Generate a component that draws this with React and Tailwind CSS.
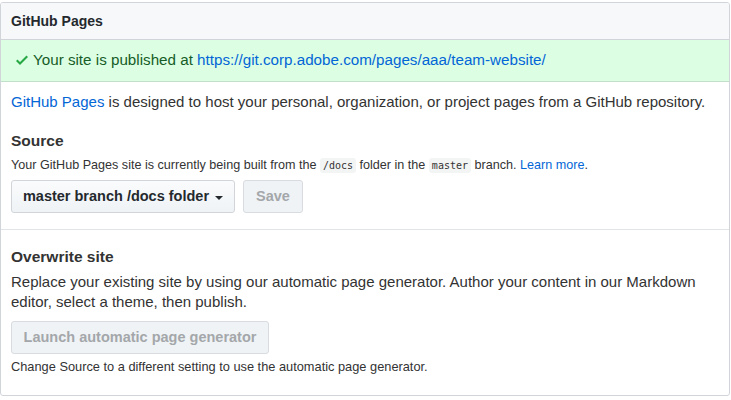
export default function App() {
  const mono = { fontFamily: '"DejaVu Sans Mono", "Liberation Mono", monospace' };

  return (
    <div
      className="bg-white pt-[2px] text-[#333] text-[15px]"
      style={{ fontFamily: '"Liberation Sans", Arial, sans-serif' }}
    >
      <div className="w-[730px] border border-[#d1d5da] rounded-[3px] overflow-hidden">
        {/* header */}
        <div className="bg-[#f6f8fa] border-b border-[#d1d5da] px-[10px] py-2 leading-5 text-sm font-bold text-[#24292e]">
          GitHub Pages
        </div>

        {/* published banner */}
        <div className="bg-[#dcffe4] border-b border-[#c3dfc9] pl-[15px] pt-[10px] pb-[11px] leading-5 text-[#165c26] flex items-center">
          <svg width="12" height="16" viewBox="0 0 12 16" className="mr-[5px] fill-[#28a745]">
            <path fillRule="evenodd" d="M12 5l-8 8-4-4 1.5-1.5L4 10l6.5-6.5L12 5z" />
          </svg>
          <span className="text-[15.2px]">
            Your site is published at{" "}
            <a href="#" className="text-[#0366d6]">
              https://git.corp.adobe.com/pages/aaa/team-website/
            </a>
          </span>
        </div>

        {/* source */}
        <div className="px-[10px] pt-[10px] pb-4 border-b border-[#e1e4e8]">
          <p className="leading-5">
            <a href="#" className="text-[#0366d6]">GitHub Pages</a> is designed to host your personal,
            organization, or project pages from a GitHub repository.
          </p>
          <h3 className="mt-[19px] text-[15.5px] font-bold leading-5">Source</h3>
          <p className="mt-[5px] text-[12.6px] leading-[18px]">
            Your GitHub Pages site is currently being built from the{" "}
            <code className="bg-[#f3f4f4] rounded-[3px] px-[3px] py-[2px] text-[10px] leading-none" style={mono}>
              /docs
            </code>{" "}
            folder in the{" "}
            <code className="bg-[#f3f4f4] rounded-[3px] px-[3px] py-[2px] text-[10px] leading-none" style={mono}>
              master
            </code>{" "}
            branch. <a href="#" className="text-[#0366d6]">Learn more</a>.
          </p>
          <div className="mt-[6px] flex gap-2">
            <button className="h-[33px] w-[224px] rounded-[3px] border border-[#d1d5da] bg-gradient-to-b from-[#fafbfc] to-[#eff3f6] text-[14.5px] font-bold text-[#24292e] flex items-center justify-center gap-[6px]">
              master branch /docs folder
              <span className="inline-block w-0 h-0 border-x-[4px] border-x-transparent border-t-[4px] border-t-[#24292e] mt-[2px]"></span>
            </button>
            <button className="h-[33px] w-[60px] rounded-[3px] border border-[#d8dbdf] bg-[#eff3f6] text-[14.5px] font-bold text-[#a4a7aa]">
              Save
            </button>
          </div>
        </div>

        {/* overwrite */}
        <div className="px-[10px] pt-4 pb-[19px]">
          <h3 className="text-[15.5px] font-bold leading-[22px]">Overwrite site</h3>
          <p className="mt-[4px] leading-5">
            Replace your existing site by using our automatic page generator. Author your content in our Markdown
            editor, select a theme, then publish.
          </p>
          <button className="mt-[9px] h-[33px] w-[258px] rounded-[3px] border border-[#d8dbdf] bg-[#eff3f6] text-[14.5px] font-bold text-[#a4a7aa]">
            Launch automatic page generator
          </button>
          <p className="mt-1 text-[12.8px] leading-[18px]">
            Change Source to a different setting to use the automatic page generator.
          </p>
        </div>
      </div>
    </div>
  );
}
